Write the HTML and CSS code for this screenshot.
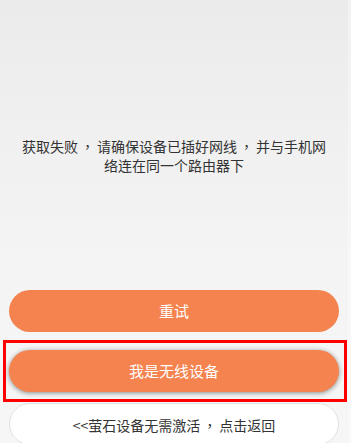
FILE: index.html
```html
<!DOCTYPE html>
<html lang="zh-CN">
<head>
<meta charset="utf-8">
<title>获取失败</title>
<link rel="stylesheet" href="styles.css">
</head>
<body>
<div class="screen">
  <main class="page">
    <p class="message">获取失败<span class="punct">，</span>请确保设备已插好网线<span class="punct">，</span>并与手机网<br>络连在同一个路由器下</p>
    <div class="actions">
      <button class="btn btn-primary" type="button">重试</button>
      <div class="highlight-wrap">
        <button class="btn btn-primary btn-raised" type="button">我是无线设备</button>
        <span class="highlight"></span>
      </div>
      <button class="btn btn-outline" type="button">&lt;&lt;萤石设备无需激活<span class="punct">，</span>点击返回</button>
    </div>
  </main>
  <div class="edge"></div>
</div>
</body>
</html>
```

FILE: styles.css
```css
html, body {
  margin: 0;
  padding: 0;
}

body {
  width: 351px;
  height: 443px;
  overflow: hidden;
  font-family: "Noto Sans CJK SC", "Noto Sans", "Liberation Sans", sans-serif;
}

.screen {
  display: flex;
  width: 351px;
  height: 443px;
  overflow: hidden;
  background: linear-gradient(to bottom, #ebebeb 0%, #f0f0f0 30%, #f4f4f4 60%, #f6f6f6 100%);
}

.page {
  width: 348px;
  flex: none;
  display: flex;
  flex-direction: column;
}

.edge {
  flex: 1;
  background: rgba(255, 255, 255, 0.35);
}

.message {
  margin: 0;
  padding-top: 137px;
  font-size: 14px;
  line-height: 19px;
  color: #333333;
  text-align: center;
  text-spacing-trim: space-all;
}

.punct {
  display: inline-block;
  width: 1.35em;
  text-align: center;
  font-family: "Noto Sans CJK TC", "Noto Sans CJK SC", sans-serif;
}

.actions {
  margin-top: 115px;
  padding: 0 9px;
  display: flex;
  flex-direction: column;
}

.btn {
  display: block;
  width: 330px;
  height: 42px;
  margin: 0;
  padding: 0;
  border-radius: 21px;
  font-family: inherit;
  font-size: 15px;
  line-height: 42px;
  text-align: center;
  cursor: pointer;
}

.btn-primary {
  background: #f4834f;
  color: #ffffff;
  border: none;
}

.btn-raised {
  box-shadow: 0 1px 5px rgba(0, 0, 0, 0.45);
}

.btn-outline {
  margin-top: 11px;
  background: #ffffff;
  color: #333333;
  border: 1px solid #e2e2e2;
  font-size: 14px;
  text-spacing-trim: space-all;
}

.highlight-wrap {
  position: relative;
  margin-top: 18px;
}

.highlight {
  position: absolute;
  top: -10px;
  bottom: -10px;
  left: -6px;
  right: -8px;
  border: 3px solid #ff0000;
  pointer-events: none;
}
```
